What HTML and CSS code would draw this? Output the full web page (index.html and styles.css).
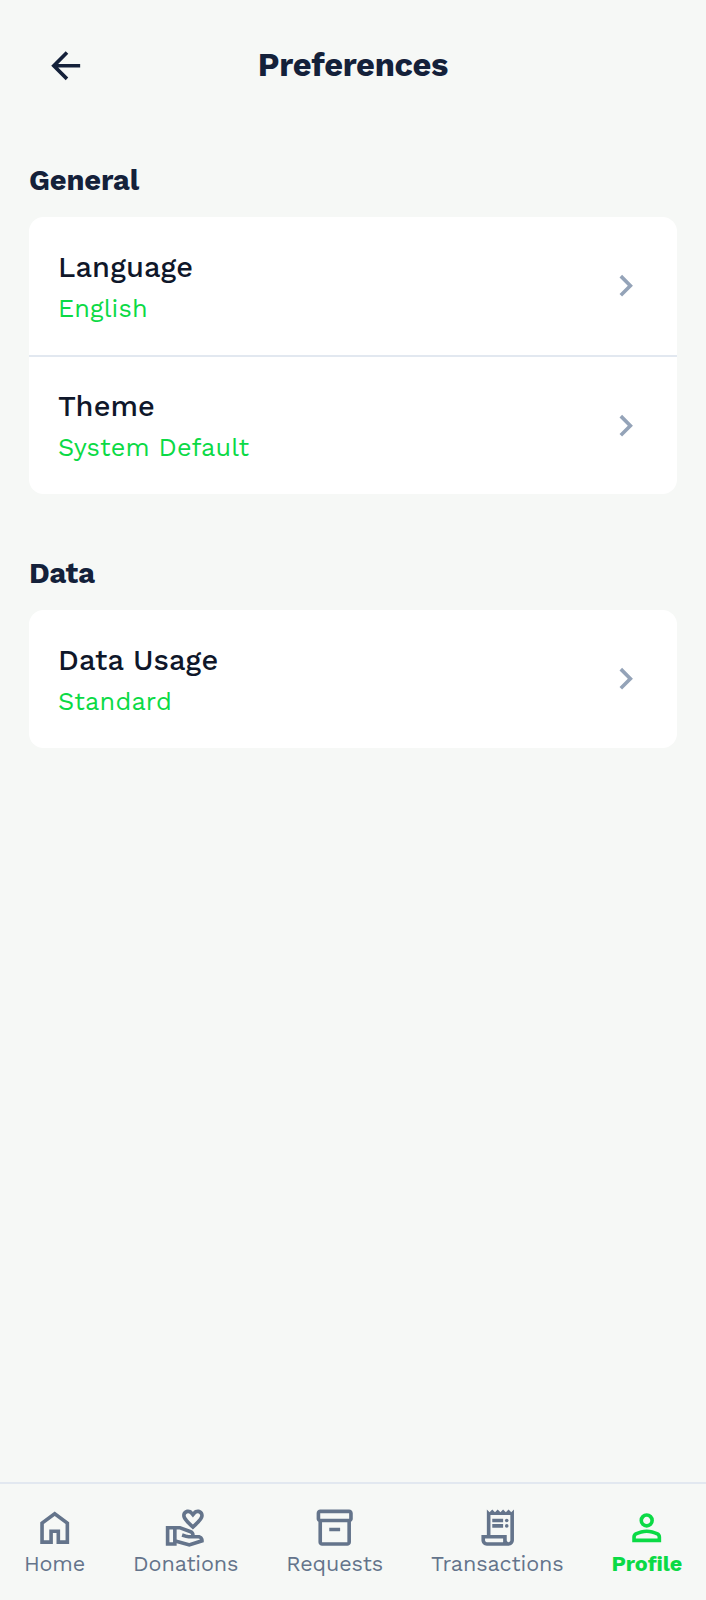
FILE: index.html
```html
<!DOCTYPE html>
<html lang="en">
<head>
<meta charset="utf-8">
<title>Preferences</title>
<link rel="stylesheet" href="styles.css">
</head>
<body>
<div class="screen">
  <header class="topbar">
    <svg class="icon back" viewBox="0 0 24 24"><path d="M20 11H7.83l5.59-5.59L12 4l-8 8 8 8 1.41-1.41L7.83 13H20v-2z"/></svg>
    <h1 class="title">Preferences</h1>
  </header>
  <main class="content">
    <section class="group">
      <h2 class="heading">General</h2>
      <div class="card">
        <div class="row">
          <div class="text"><div class="name">Language</div><div class="value">English</div></div>
          <svg class="icon chevron" viewBox="0 0 24 24"><path d="M8.59 16.59 13.17 12 8.59 7.41 10 6l6 6-6 6z"/></svg>
        </div>
        <div class="row">
          <div class="text"><div class="name">Theme</div><div class="value">System Default</div></div>
          <svg class="icon chevron" viewBox="0 0 24 24"><path d="M8.59 16.59 13.17 12 8.59 7.41 10 6l6 6-6 6z"/></svg>
        </div>
      </div>
    </section>
    <section class="group">
      <h2 class="heading">Data</h2>
      <div class="card">
        <div class="row">
          <div class="text"><div class="name">Data Usage</div><div class="value">Standard</div></div>
          <svg class="icon chevron" viewBox="0 0 24 24"><path d="M8.59 16.59 13.17 12 8.59 7.41 10 6l6 6-6 6z"/></svg>
        </div>
      </div>
    </section>
  </main>
  <nav class="tabs">
    <a class="tab">
      <svg class="icon" viewBox="0 0 24 24"><path d="M6 19h3v-6h6v6h3v-9l-6-4.5L6 10v9Zm-2 2V9l8-6 8 6v12h-7v-6h-2v6H4Z"/></svg>
      <span>Home</span>
    </a>
    <a class="tab">
      <svg class="icon" viewBox="0 0 24 24"><path d="M16 13c3.09-2.81 6-5.44 6-7.7C22 3.45 20.55 2 18.7 2c-1.04 0-2.05.49-2.7 1.25C15.34 2.49 14.34 2 13.3 2 11.45 2 10 3.45 10 5.3c0 2.26 2.91 4.89 6 7.7zm-2.7-9c.44 0 .89.21 1.18.55L16 6.34l1.52-1.79c.29-.34.74-.55 1.18-.55.74 0 1.3.56 1.3 1.3 0 1.12-2.04 3.17-4 4.99-1.96-1.82-4-3.88-4-4.99 0-.74.56-1.3 1.3-1.3zM19 16h-2c0-1.2-.75-2.28-1.87-2.7L8.97 11H1v11h6v-1.44l7 1.94 8-2.5v-1c0-1.66-1.34-3-3-3zM3 20v-7h2v7H3zm10.97.41L7 18.48V13h1.61l5.82 2.17c.34.13.57.46.57.83 0 0-1.99-.05-2.3-.15l-2.38-.79-.63 1.9 2.38.79c.51.17 1.04.26 1.58.26H19c.39 0 .74.23.9.56l-5.93 1.84z"/></svg>
      <span>Donations</span>
    </a>
    <a class="tab">
      <svg class="icon" viewBox="0 0 24 24"><path d="M20 2H4c-1 0-2 .9-2 2v3.01c0 .72.43 1.34 1 1.69V20c0 1.1 1.1 2 2 2h14c.9 0 2-.9 2-2V8.7c.57-.35 1-.97 1-1.69V4c0-1.1-1-2-2-2zm-1 18H5V9h14v11zm1-13H4V4h16v3zM9 12h6v2H9z"/></svg>
      <span>Requests</span>
    </a>
    <a class="tab">
      <svg class="icon" viewBox="0 0 24 24"><path d="M19.5 3.5 18 2l-1.5 1.5L15 2l-1.5 1.5L12 2l-1.5 1.5L9 2 7.5 3.5 6 2v14H3v3c0 1.66 1.34 3 3 3h12c1.66 0 3-1.34 3-3V2l-1.5 1.5zM15 20H6c-.55 0-1-.45-1-1v-1h10v2zm4-1c0 .55-.45 1-1 1s-1-.45-1-1v-3H8V5h11v14z"/><path d="M9 7h6v2H9zM9 10h6v2H9z"/><circle cx="17" cy="8" r="1"/><circle cx="17" cy="11" r="1"/></svg>
      <span>Transactions</span>
    </a>
    <a class="tab active">
      <svg class="icon" viewBox="0 0 24 24"><path d="M12 12q-1.65 0-2.825-1.175T8 8t1.175-2.825T12 4t2.825 1.175T16 8t-1.175 2.825T12 12Zm-8 8v-2.8q0-.85.438-1.563T5.6 14.55q1.55-.775 3.15-1.163T12 13t3.25.388 3.15 1.162q.725.375 1.163 1.088T20 17.2V20H4Zm2-2h12v-.8q0-.275-.138-.5T17.5 16.35q-1.35-.675-2.725-1.013T12 15t-2.775.337T6.5 16.35q-.225.125-.363.35T6 17.2v.8Zm6-8q.825 0 1.413-.588T14 8t-.588-1.413T12 6t-1.413.588T10 8t.588 1.413T12 10Z"/></svg>
      <span>Profile</span>
    </a>
  </nav>
</div>
</body>
</html>
```
FILE: styles.css
```css
* { box-sizing: border-box; }
body {
  margin: 0;
  background: #f6f8f6;
  font-family: "Work Sans", Inter, sans-serif;
  color: #0f172a;
}
h1, h2 { margin: 0; font-weight: 700; white-space: nowrap; }
.screen { height: 1600px; display: flex; flex-direction: column; }
.icon { display: block; width: 43.4px; height: 43.4px; fill: currentColor; flex: none; }
.topbar {
  height: 130px;
  padding: 0 43.8px;
  display: grid;
  grid-template-columns: 43.4px 1fr 43.4px;
  align-items: center;
}
.topbar, .heading { color: #14213a; }
.back { margin-top: 1px; }
.title { text-align: center; font-size: 32.6px; line-height: 40px; letter-spacing: -0.35px; }
.content { flex: 1; padding: 29px; display: flex; flex-direction: column; gap: 58px; }
.heading { height: 58px; line-height: 43px; font-size: 29px; letter-spacing: -0.15px; }
.card { background: #fff; border-radius: 14.5px; overflow: hidden; }
.row {
  height: 138px;
  padding: 0 30px 0 29px;
  display: flex;
  align-items: center;
  justify-content: space-between;
}
.row + .row { height: 139px; border-top: 2px solid #e2e8f0; }
.name { font-size: 29px; font-weight: 500; line-height: 43px; letter-spacing: 0.1px; white-space: nowrap; }
.value { font-size: 25.3px; font-weight: 400; line-height: 38px; letter-spacing: 0.15px; color: #0bda45; white-space: nowrap; }
.chevron { color: #94a3b8; }
.tabs {
  height: 118px;
  border-top: 2px solid #e2e8f0;
  padding-top: 22px;
  display: flex;
  justify-content: space-around;
  color: #64748b;
}
.tab { display: flex; flex-direction: column; align-items: center; font-size: 21.6px; line-height: 30px; letter-spacing: -0.1px; white-space: nowrap; }
.active { color: #0bda45; font-weight: 700; }
```
